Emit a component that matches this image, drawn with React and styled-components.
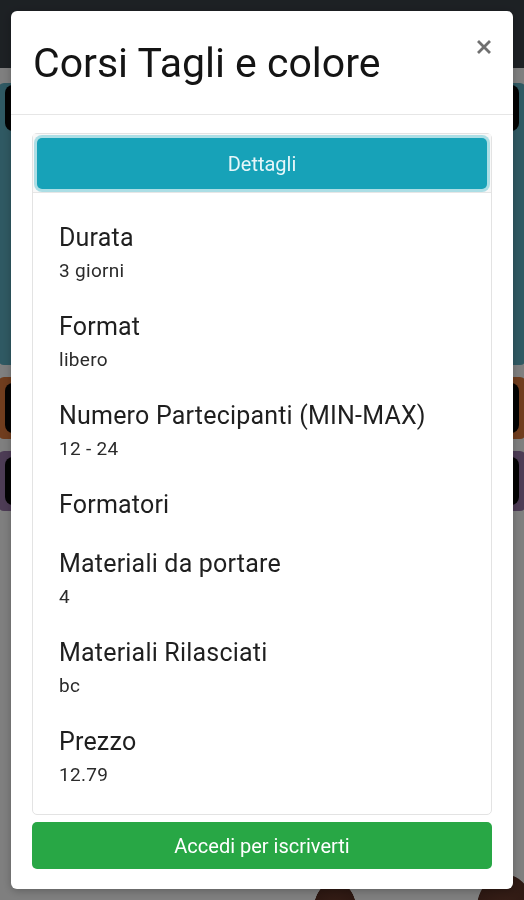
import React from "react";
import styled, { createGlobalStyle } from "styled-components";

const GlobalStyle = createGlobalStyle`
  html, body { margin: 0; padding: 0; }
  body {
    font-family: Roboto, "Noto Sans", "Liberation Sans", sans-serif;
    background: #ffffff;
    overflow: hidden;
  }
  * { box-sizing: border-box; }
`;

/* ---------- page behind the modal ---------- */
const Page = styled.div`
  height: 900px;
  display: flex;
  flex-direction: column;
  background: #ffffff;
`;

const Navbar = styled.div`
  height: 68px;
  background: #3b4249;
  flex-shrink: 0;
`;

const CardList = styled.div`
  display: flex;
  flex-direction: column;
  gap: 12px;
  padding: 15px 0 0;
`;

const ColorCard = styled.div`
  height: ${(p) => p.$h}px;
  background: ${(p) => p.$bg};
  border-radius: 6px;
  margin: 0 -2px;
  padding: ${(p) => (p.$full ? "6px 7px" : "2px 7px 0")};
  display: flex;
  flex-direction: column;
`;

const CardInner = styled.div`
  height: ${(p) => p.$h};
  background: #050505;
  border-radius: 8px;
`;

const Photo = styled.div`
  margin-top: auto;
  height: 50px;
  background:
    radial-gradient(ellipse 30px 40px at 335px 60px, #6a3a2c 0%, #5a3024 70%, transparent 72%),
    radial-gradient(ellipse 40px 50px at 505px 60px, #6e3d2e 0%, #5c3226 70%, transparent 72%);
`;

/* ---------- modal ---------- */
const Backdrop = styled.div`
  position: fixed;
  inset: 0;
  background: rgba(0, 0, 0, 0.5);
`;

const ModalLayer = styled.div`
  position: fixed;
  inset: 0;
  padding: 11px;
  display: flex;
  align-items: flex-start;
`;

const Modal = styled.div`
  width: 100%;
  background: #ffffff;
  border-radius: 6px;
  box-shadow: 0 2px 8px rgba(0, 0, 0, 0.25);
  display: flex;
  flex-direction: column;
`;

const Header = styled.div`
  display: flex;
  align-items: flex-start;
  justify-content: space-between;
  padding: 28px 22px 27px;
  border-bottom: 1px solid #e6e6e6;
`;

const Title = styled.h4`
  margin: 0;
  font-size: 41px;
  line-height: 48px;
  font-weight: 400;
  color: #141414;
`;

const CloseButton = styled.button`
  border: 0;
  background: transparent;
  padding: 0;
  margin-top: 1px;
  width: 14px;
  height: 14px;
  display: flex;
  cursor: pointer;
`;

const Body = styled.div`
  display: flex;
  flex-direction: column;
  gap: 7px;
  padding: 18px 21px 20px;
`;

const Card = styled.div`
  border: 1px solid #e3e3e3;
  border-radius: 5px;
  display: flex;
  flex-direction: column;
`;

const CardHeader = styled.div`
  padding: 4px 4px 3px;
  background: #f8f8f8;
  border-bottom: 1px solid #e6e6e6;
`;

const DetailsButton = styled.button`
  width: 100%;
  height: 51px;
  border: 0;
  border-radius: 5px;
  background: #17a2b8;
  color: #e6f6f9;
  font-family: inherit;
  font-size: 20px;
  box-shadow: 0 0 0 3px rgba(110, 200, 214, 0.55);
  cursor: pointer;
`;

const CardBody = styled.div`
  display: flex;
  flex-direction: column;
  gap: 29px;
  padding: 30px 26px 27px;
`;

const Item = styled.div`
  display: flex;
  flex-direction: column;
`;

const Label = styled.div`
  font-size: 25px;
  line-height: 30px;
  letter-spacing: 0.2px;
  color: #1f1f1f;
`;

const Value = styled.div`
  margin-top: 6px;
  font-size: 19px;
  line-height: 24px;
  letter-spacing: 0.3px;
  color: #2b2b2b;
`;

const EnrollButton = styled.button`
  width: 100%;
  height: 47px;
  border: 0;
  border-radius: 5px;
  background: #28a745;
  color: #ffffff;
  font-family: inherit;
  font-size: 20px;
  cursor: pointer;
`;

const details = [
  { label: "Durata", value: "3 giorni" },
  { label: "Format", value: "libero" },
  { label: "Numero Partecipanti (MIN-MAX)", value: "12 - 24" },
  { label: "Formatori", value: "" },
  { label: "Materiali da portare", value: "4" },
  { label: "Materiali Rilasciati", value: "bc" },
  { label: "Prezzo", value: "12.79" },
];

export default function App() {
  return (
    <>
      <GlobalStyle />
      <Page>
        <Navbar />
        <CardList>
          <ColorCard $h={282} $bg="#5fb3c6">
            <CardInner $h="46px" />
          </ColorCard>
          <ColorCard $h={62} $bg="#e07a3c" $full>
            <CardInner $h="100%" />
          </ColorCard>
          <ColorCard $h={60} $bg="#9a78ab" $full>
            <CardInner $h="100%" />
          </ColorCard>
        </CardList>
        <Photo />
      </Page>
      <Backdrop />
      <ModalLayer>
        <Modal role="dialog" aria-modal="true">
          <Header>
            <Title>Corsi Tagli e colore</Title>
            <CloseButton aria-label="Chiudi">
              <svg width="14" height="14" viewBox="0 0 14 14">
                <path
                  d="M2 2 L12 12 M12 2 L2 12"
                  stroke="#707070"
                  strokeWidth="2.8"
                  strokeLinecap="square"
                  fill="none"
                />
              </svg>
            </CloseButton>
          </Header>
          <Body>
            <Card>
              <CardHeader>
                <DetailsButton>Dettagli</DetailsButton>
              </CardHeader>
              <CardBody>
                {details.map((d) => (
                  <Item key={d.label}>
                    <Label>{d.label}</Label>
                    {d.value && <Value>{d.value}</Value>}
                  </Item>
                ))}
              </CardBody>
            </Card>
            <EnrollButton>Accedi per iscriverti</EnrollButton>
          </Body>
        </Modal>
      </ModalLayer>
    </>
  );
}
